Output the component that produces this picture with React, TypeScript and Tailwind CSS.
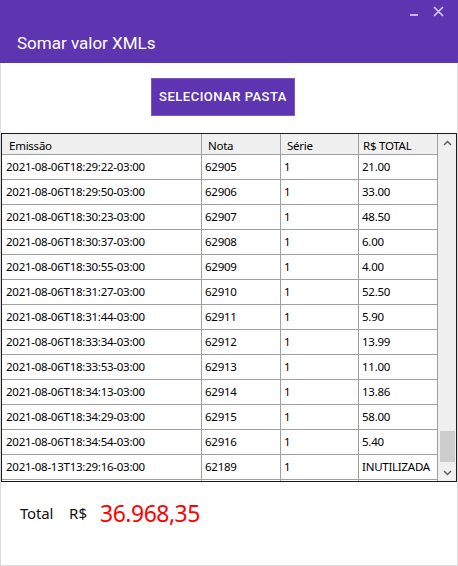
import React from 'react'

const rows = [
  { emissao: '2021-08-06T18:29:22-03:00', nota: '62905', serie: '1', total: '21.00' },
  { emissao: '2021-08-06T18:29:50-03:00', nota: '62906', serie: '1', total: '33.00' },
  { emissao: '2021-08-06T18:30:23-03:00', nota: '62907', serie: '1', total: '48.50' },
  { emissao: '2021-08-06T18:30:37-03:00', nota: '62908', serie: '1', total: '6.00' },
  { emissao: '2021-08-06T18:30:55-03:00', nota: '62909', serie: '1', total: '4.00' },
  { emissao: '2021-08-06T18:31:27-03:00', nota: '62910', serie: '1', total: '52.50' },
  { emissao: '2021-08-06T18:31:44-03:00', nota: '62911', serie: '1', total: '5.90' },
  { emissao: '2021-08-06T18:33:34-03:00', nota: '62912', serie: '1', total: '13.99' },
  { emissao: '2021-08-06T18:33:53-03:00', nota: '62913', serie: '1', total: '11.00' },
  { emissao: '2021-08-06T18:34:13-03:00', nota: '62914', serie: '1', total: '13.86' },
  { emissao: '2021-08-06T18:34:29-03:00', nota: '62915', serie: '1', total: '58.00' },
  { emissao: '2021-08-06T18:34:54-03:00', nota: '62916', serie: '1', total: '5.40' },
  { emissao: '2021-08-13T13:29:16-03:00', nota: '62189', serie: '1', total: 'INUTILIZADA' },
  { emissao: '', nota: '', serie: '', total: '' },
]

const cellFont = { fontFamily: '"Noto Sans", "Liberation Sans", sans-serif' }

function Chevron({ up }: { up?: boolean }) {
  return (
    <svg width="9" height="6" viewBox="0 0 9 6" className="text-[#606060]">
      <path
        d={up ? 'M1 5 L4.5 1.5 L8 5' : 'M1 1 L4.5 4.5 L8 1'}
        fill="none"
        stroke="currentColor"
        strokeWidth="1.5"
      />
    </svg>
  )
}

export default function App() {
  return (
    <div className="w-[458px] h-[566px] flex flex-col bg-white">
      {/* Title bar */}
      <div className="h-[63px] bg-[#5e35b1] flex flex-col">
        <div className="h-[33px] flex">
          <svg width="40" height="20" viewBox="0 0 40 20" className="ml-auto mr-[12px] mt-[4px]">
            <path d="M4 11 H12" stroke="#c9b8e6" strokeWidth="2" />
            <path d="M28 3 L37 12 M37 3 L28 12" stroke="#d6c9ee" strokeWidth="1.7" />
          </svg>
        </div>
        <div
          className="pl-[17px] text-[17px] leading-[20px] font-normal text-white"
          style={{ fontFamily: 'Roboto, sans-serif' }}
        >
          Somar valor XMLs
        </div>
      </div>

      {/* Body */}
      <div className="flex-1 flex flex-col border-x border-b border-[#dcdcdc]">
        <button
          className="mt-[15px] ml-[150px] w-[144px] h-[38px] bg-[#5e35b1] border border-[#7e57c2] text-white text-[13px] font-medium tracking-[0.5px]"
          style={{ fontFamily: 'Roboto, sans-serif' }}
        >
          SELECIONAR PASTA
        </button>

        {/* Table */}
        <div
          className="mt-[17px] w-[456px] border border-[#1a1a1a] flex text-[11.5px] tracking-[-0.25px] text-black"
          style={cellFont}
        >
          <div className="w-[436px] flex flex-col">
            <div className="h-[21px] flex bg-[#f0f0f0] border-b border-[#a0a0a0]">
              <div className="w-[200px] pl-[7px] pt-[2px] border-r border-[#a0a0a0] leading-[20px]">Emissão</div>
              <div className="w-[79px] pl-[6px] pt-[2px] border-r border-[#a0a0a0] leading-[20px]">Nota</div>
              <div className="w-[78px] pl-[6px] pt-[2px] border-r border-[#a0a0a0] leading-[20px]">Série</div>
              <div className="w-[79px] pl-[4px] pt-[2px] border-r border-[#a0a0a0] leading-[20px]">R$ TOTAL</div>
            </div>
            <div className="h-[326px] overflow-hidden">
              {rows.map((r, i) => (
                <div key={i} className="h-[25px] flex border-b border-[#a0a0a0]">
                  <div className="w-[200px] pl-[4px] border-r border-[#a0a0a0] leading-[24px]">{r.emissao}</div>
                  <div className="w-[79px] pl-[3px] border-r border-[#a0a0a0] leading-[24px]">{r.nota}</div>
                  <div className="w-[78px] pl-[3px] border-r border-[#a0a0a0] leading-[24px]">{r.serie}</div>
                  <div className="w-[79px] pl-[3px] border-r border-[#a0a0a0] leading-[24px]">{r.total}</div>
                </div>
              ))}
            </div>
          </div>

          {/* Scrollbar */}
          <div className="w-[18px] bg-[#f0f0f0] flex flex-col">
            <div className="h-[17px] flex items-center justify-center">
              <Chevron up />
            </div>
            <div className="h-[280px]" />
            <div className="h-[31px] ml-[2px] mr-[1px] bg-[#cdcdcd]" />
            <div className="flex-1" />
            <div className="h-[17px] flex items-center justify-center">
              <Chevron />
            </div>
          </div>
        </div>

        {/* Total */}
        <div className="flex items-center mt-[15px] pl-[19px]" style={cellFont}>
          <span className="text-[15px] tracking-[-0.2px] text-[#111]">Total</span>
          <span className="ml-[16px] text-[15px] text-[#111]">R$</span>
          <span className="ml-[13px] text-[23px] leading-[32px] tracking-[-0.5px] text-[#ff0000]">36.968,35</span>
        </div>
      </div>
    </div>
  )
}
